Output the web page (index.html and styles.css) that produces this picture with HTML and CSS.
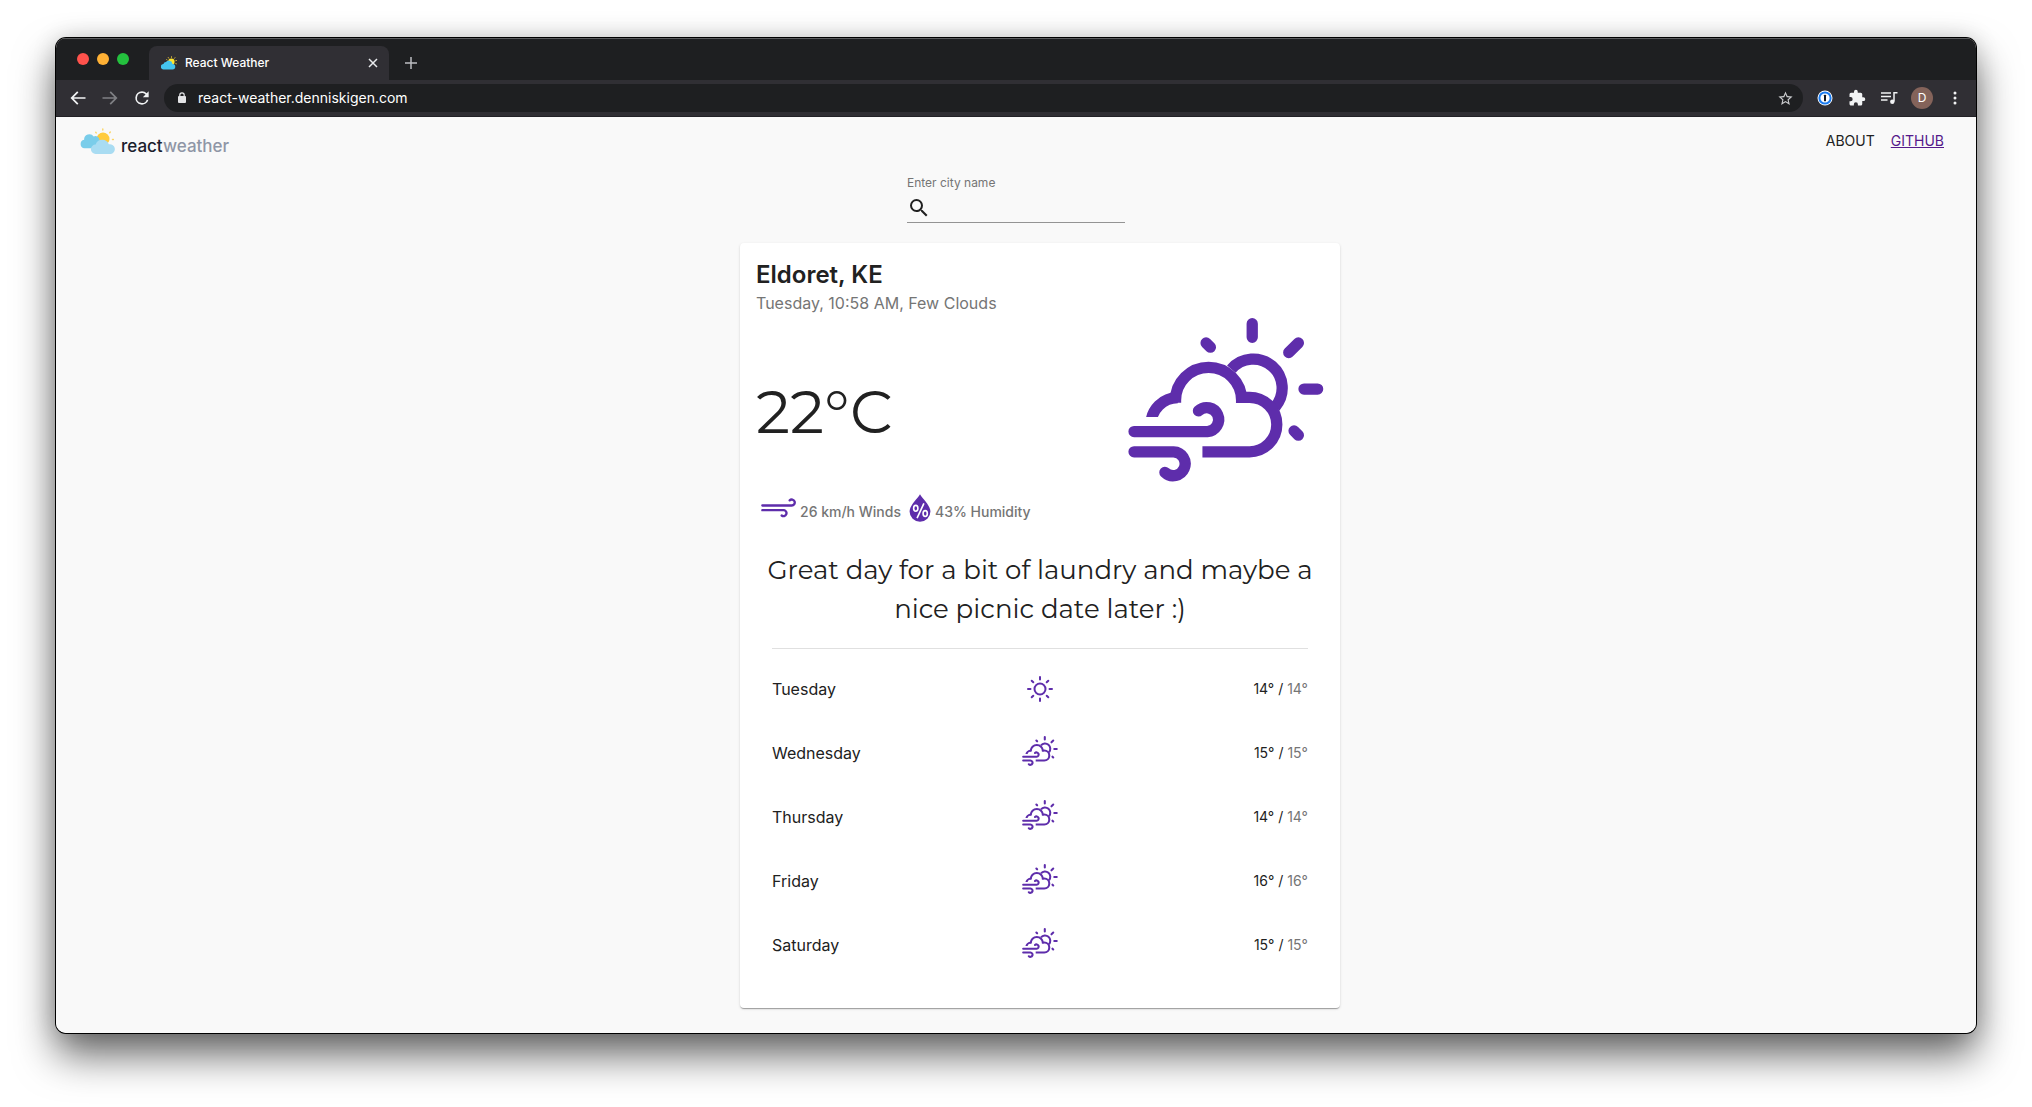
FILE: index.html
```html
<!DOCTYPE html>
<html lang="en">
<head>
<meta charset="utf-8">
<meta name="viewport" content="width=device-width, initial-scale=1">
<title>React Weather</title>
<link rel="stylesheet" href="styles.css">
</head>
<body>
<svg class="sprite" aria-hidden="true">
  <defs>
    <clipPath id="cloud-tail"><rect x="90" y="260" width="120" height="92"/></clipPath>
  </defs>
  <symbol id="gusts" viewBox="56 54 588 494">
    <g fill="none" stroke="currentColor" stroke-width="34">
      <path stroke-linecap="round" d="M429 71v41M290 129l13 13M568 129l-29 29M585 268h41M555 394l13 13"/>
      <path d="M366 208A87 87 0 0 1 498 322"/>
      <path clip-path="url(#cloud-tail)" d="M124 385V375A81 81 0 0 1 205 294"/>
      <path d="M198 309V302A99.500 99.500 0 0 1 397 302V310"/>
      <path d="M386 293H421A82 82 0 0 1 421 457H279"/>
      <path stroke-linecap="round" d="M73 396H294A36 36 0 1 0 267 334"/>
      <path stroke-linecap="round" d="M73 457H192A36 36 0 1 1 166 519"/>
    </g>
  </symbol>
  <symbol id="sunny" viewBox="0 0 26 26">
    <g fill="none" stroke="currentColor" stroke-width="2" stroke-linecap="round">
      <circle cx="13" cy="13" r="5.500"/>
      <path d="M13 1v2.500M13 22.500V25M1 13h2.500M22.500 13H25M4.700 4.700l1.600 1.600M19.700 19.700l1.600 1.600M4.700 21.300l1.600-1.600M19.700 6.300l1.600-1.600"/>
    </g>
  </symbol>
</svg>

<div class="window">
  <header class="chrome">
    <div class="tabs">
      <div class="lights"><span class="light red"></span><span class="light amber"></span><span class="light green"></span></div>
      <div class="tab">
        <svg class="favicon" viewBox="0 0 16 14" aria-hidden="true">
          <path stroke="#c8a93c" stroke-width="1" stroke-linecap="round" d="M10.500 .6v.9M7.200 1.400l.5.8M14 1.600l-.6.8M15.600 4.500l-.9.2M15.500 7.800l-.8-.3M5.600 3.600l.6.4"/>
          <circle cx="10.400" cy="5.800" r="3.200" fill="#ffe62e"/>
          <path fill="#45c5f0" d="M2.700 13.500a2.700 2.700 0 0 1-.3-5.400 3 3 0 0 1 2.500-2 3.700 3.700 0 0 1 6.600 1.800 2.800 2.800 0 0 1-.1 5.600z"/>
        </svg>
        <span class="tab-title">React Weather</span>
        <button class="tab-close" aria-label="Close tab"><svg viewBox="0 0 10 10" width="10" height="10"><path d="M1 1l8 8M9 1l-8 8" stroke="#e8eaed" stroke-width="1.500"/></svg></button>
      </div>
      <button class="new-tab" aria-label="New tab"><svg viewBox="0 0 12 12" width="12" height="12"><path d="M6 0v12M0 6h12" stroke="#bdbec2" stroke-width="1.500"/></svg></button>
    </div>
    <div class="toolbar">
      <button aria-label="Back"><svg viewBox="0 0 24 24" width="20" height="20"><path fill="#f1f3f4" d="M21 11H6.800l5.700-5.600L11 4l-8 8 8 8 1.500-1.400L6.800 13H21z"/></svg></button>
      <button aria-label="Forward"><svg viewBox="0 0 24 24" width="20" height="20"><path fill="#7f8084" d="M3 11h14.200l-5.700-5.600L13 4l8 8-8 8-1.500-1.400 5.700-5.600H3z"/></svg></button>
      <button aria-label="Reload"><svg viewBox="0 0 24 24" width="20" height="20"><path fill="#f1f3f4" d="M17.650 6.350A7.960 7.960 0 0 0 12 4a8 8 0 1 0 7.730 10h-2.080A6 6 0 1 1 12 6c1.660 0 3.140.69 4.220 1.780L13 11h7V4z"/></svg></button>
      <div class="omnibox">
        <svg viewBox="0 0 10 12" width="10" height="12" aria-hidden="true"><rect x="1" y="4" width="8" height="7" rx="1" fill="#e3e4e6"/><path d="M2.800 5V3a2.200 2.200 0 0 1 4.400 0v2" fill="none" stroke="#e3e4e6" stroke-width="1.200"/></svg>
        <input class="url" type="text" aria-label="Address" value="react-weather.denniskigen.com">
        <button aria-label="Bookmark"><svg viewBox="0 0 24 24" width="17" height="17"><path fill="#c9cacd" d="M22 9.240l-7.190-.62L12 2 9.190 8.630 2 9.240l5.460 4.730L5.820 21 12 17.270 18.180 21l-1.630-7.030zM12 15.400l-3.760 2.270 1-4.280-3.320-2.880 4.380-.38L12 6.100l1.710 4.040 4.380.38-3.320 2.880 1 4.280z"/></svg></button>
      </div>
      <button aria-label="Password manager"><svg viewBox="0 0 16 16" width="16" height="16"><circle cx="8" cy="8" r="7.500" fill="#fff"/><circle cx="8" cy="8" r="5.600" fill="#fff" stroke="#1a7bf0" stroke-width="2"/><rect x="7" y="4.700" width="2" height="6.600" rx=".6" fill="#14181f"/></svg></button>
      <button aria-label="Extensions"><svg viewBox="0 0 24 24" width="18" height="18"><path fill="#f1f3f4" d="M20.500 11H19V7a2 2 0 0 0-2-2h-4V3.500a2.500 2.500 0 0 0-5 0V5H4a2 2 0 0 0-2 2v3.800h1.500a2.700 2.700 0 0 1 0 5.400H2V20c0 1.100.9 2 2 2h3.800v-1.500a2.700 2.700 0 0 1 5.400 0V22H17a2 2 0 0 0 2-2v-4h1.500a2.500 2.500 0 0 0 0-5z"/></svg></button>
      <button aria-label="Media controls"><svg viewBox="0 0 17 14" width="17" height="14"><path fill="none" stroke="#f1f3f4" stroke-width="1.500" d="M0 2h10M0 5.500h10M0 9h6.500M13 10.500V1.700h3.500"/><circle cx="11.300" cy="10.700" r="2.200" fill="#f1f3f4"/></svg></button>
      <button class="avatar" aria-label="Profile">D</button>
      <button aria-label="Menu"><svg viewBox="0 0 4 14" width="4" height="14"><g fill="#f1f3f4"><circle cx="2" cy="2" r="1.500"/><circle cx="2" cy="7" r="1.500"/><circle cx="2" cy="12" r="1.500"/></g></svg></button>
    </div>
  </header>

  <div class="page">
    <nav class="nav">
      <div class="brand">
        <svg viewBox="0 0 36 27" width="36" height="27" aria-hidden="true">
          <path stroke="#fcd665" stroke-width="1.400" stroke-linecap="round" d="M22.800 1v1M15.700 4.200l.5.700M30.300 4l-.6.700M33.400 11.500h-.9"/>
          <circle cx="23" cy="11" r="6.500" fill="#ffcb3d"/>
          <path fill="#7acdea" d="M4.500 20.300a4.300 4.300 0 0 1-.4-8.500 5.300 5.300 0 0 1 9.600-3.300 4 4 0 0 1 5.800 3.700 4.200 4.200 0 0 1-1.300 8.100z"/>
          <path fill="#a9dcf2" d="M15.600 26a4.700 4.700 0 0 1 0-9.400 7 7 0 0 1 13.200-.3 4.900 4.900 0 0 1 2.200 9.700z"/>
        </svg>
        <span class="brand-name">react<span class="brand-light">weather</span></span>
      </div>
      <div class="links"><a class="about" href="#about">ABOUT</a><a class="github" href="#github">GITHUB</a></div>
    </nav>

    <form class="search">
      <label for="city">Enter city name</label>
      <div class="field">
        <svg viewBox="0 0 24 24" width="24" height="24" aria-hidden="true"><path fill="#212121" d="M15.500 14h-.79l-.28-.27A6.470 6.470 0 0 0 16 9.500 6.500 6.500 0 1 0 9.500 16c1.610 0 3.090-.59 4.230-1.570l.27.28v.79l5 4.990L20.490 19zm-6 0C7.010 14 5 11.990 5 9.500S7.010 5 9.500 5 14 7.010 14 9.500 11.990 14 9.500 14z"/></svg>
        <input id="city" type="text">
      </div>
    </form>

    <main class="stage">
      <article class="card">
        <h1>Eldoret, KE</h1>
        <p class="when">Tuesday, 10:58 AM, Few Clouds</p>
        <div class="now">
          <p class="temp">22°C</p>
          <svg class="now-icon"><use href="#gusts"/></svg>
        </div>
        <div class="details">
          <svg viewBox="93 86 105 60" width="35" height="20" aria-hidden="true"><path fill="none" stroke="currentColor" stroke-width="7" stroke-linecap="round" d="M97 108.500H185A9 9 0 1 0 179 93M97 122.500H162A9 9 0 1 1 155 138.500"/></svg>
          <span class="wind">26 km/h Winds</span>
          <svg class="drop" viewBox="539 71 66 86" width="22" height="28" aria-hidden="true">
            <path fill="currentColor" d="M572 72C580 86 604 106 604 125A32 31 0 0 1 540 125C540 106 564 86 572 72z"/>
            <g fill="none" stroke="#fff" stroke-width="5"><ellipse cx="559" cy="115" rx="6.500" ry="9"/><ellipse cx="588" cy="131" rx="6.500" ry="9"/><path d="M584 100L563 145"/></g>
          </svg>
          <span>43% Humidity</span>
        </div>
        <p class="advice">Great day for a bit of laundry and maybe a nice picnic date later :)</p>
        <table class="forecast">
          <tbody>
            <tr><th scope="row">Tuesday</th><td class="sky"><svg class="sun"><use href="#sunny"/></svg></td><td class="range">14° / <span>14°</span></td></tr>
            <tr><th scope="row">Wednesday</th><td class="sky"><svg><use href="#gusts"/></svg></td><td class="range">15° / <span>15°</span></td></tr>
            <tr><th scope="row">Thursday</th><td class="sky"><svg><use href="#gusts"/></svg></td><td class="range">14° / <span>14°</span></td></tr>
            <tr><th scope="row">Friday</th><td class="sky"><svg><use href="#gusts"/></svg></td><td class="range">16° / <span>16°</span></td></tr>
            <tr><th scope="row">Saturday</th><td class="sky"><svg><use href="#gusts"/></svg></td><td class="range">15° / <span>15°</span></td></tr>
          </tbody>
        </table>
      </article>
    </main>
  </div>
</div>
</body>
</html>
```
FILE: styles.css
```css
* { box-sizing: border-box; }

body {
  margin: 0;
  min-height: 100vh;
  padding: 38px 56px 74px;
  display: flex;
  background: #fff;
  color: #212121;
  font: 16px/24px Inter, "Liberation Sans", sans-serif;
}

h1, p { margin: 0; }
svg { display: block; flex: none; }
.sprite { width: 0; height: 0; position: absolute; }

button {
  border: 0;
  padding: 0;
  background: none;
  font: inherit;
  display: flex;
  align-items: center;
  justify-content: center;
  flex: none;
}

input {
  min-width: 0;
  flex: 1;
  border: 0;
  padding: 0;
  background: none;
  font: inherit;
  outline: 0;
}

/* Browser window */
.window {
  flex: 1;
  min-width: 0;
  display: flex;
  flex-direction: column;
  border-radius: 10px;
  overflow: hidden;
  box-shadow: 0 0 0 1px #000, 0 22px 40px rgba(0, 0, 0, .6), 0 0 24px rgba(0, 0, 0, .16);
}

.chrome { background: #1e1f21; box-shadow: inset 0 1px #5b5c5e; }

.tabs {
  height: 42px;
  padding: 0 21px;
  display: flex;
  align-items: flex-end;
}

.lights { display: flex; gap: 8px; padding-bottom: 15px; margin-right: 12px; }
.light { width: 12px; height: 12px; border-radius: 50%; }
.red { background: #ff524c; }
.amber { background: #ffb135; }
.green { background: #24c13e; }

.tab {
  position: relative;
  width: 256px;
  height: 34px;
  padding: 0 19px 0 20px;
  display: flex;
  align-items: center;
  gap: 8px;
}
.tab::before {
  content: "";
  position: absolute;
  inset: 0 8px;
  border-radius: 8px 8px 0 0;
  background: #302f34;
}
.tab > * { position: relative; }
.favicon { width: 16px; height: 14px; }
.tab-title { flex: 1; color: #fff; font-size: 12px; line-height: 16px; font-weight: 500; }
.tab-close { width: 10px; height: 16px; }
.new-tab { width: 12px; height: 34px; margin-left: 8px; }

.toolbar {
  height: 37px;
  padding: 0 11px 0 12px;
  display: flex;
  align-items: center;
  gap: 12px;
  background: #302f34;
  border-bottom: 1px solid #222126;
}
.toolbar button { width: 20px; height: 20px; }
.toolbar .avatar {
  width: 22px;
  height: 22px;
  border-radius: 50%;
  background: #84635a;
  color: #fff;
  font-size: 12px;
  line-height: 22px;
}

.omnibox {
  flex: 1;
  height: 28px;
  padding: 0 8px 0 13px;
  display: flex;
  align-items: center;
  gap: 11px;
  border-radius: 14px;
  background: #1e1f21;
}
.url { color: #fff; font-size: 14px; line-height: 20px; }

/* Page */
.page { flex: 1; padding: 0 24px 24px; background: #f9f9f9; }

.nav {
  height: 56px;
  padding: 11px 8px 0 0;
  display: flex;
  align-items: flex-start;
  justify-content: space-between;
}
.brand { display: flex; align-items: flex-end; gap: 5px; }
.brand-name { font-size: 17px; line-height: 18px; font-weight: 500; color: #1a202c; }
.brand-light { color: #8f96a6; }
.links { display: flex; gap: 16px; font-size: 14px; line-height: 26px; }
.about { color: #212121; text-decoration: none; }
.github { color: #551a8b; }

.search { width: 218px; margin: 0 auto 20px; }
.search label { display: block; font-size: 12px; line-height: 20px; color: #757575; }
.field { display: flex; align-items: center; height: 30px; border-bottom: 1px solid #949494; }

.stage { padding-left: 48px; }
.card {
  max-width: 600px;
  margin: 0 auto;
  padding: 16px 16px 31px;
  border-radius: 4px;
  background: #fff;
  box-shadow: 0 2px 1px -1px rgba(0, 0, 0, .2), 0 1px 1px rgba(0, 0, 0, .14), 0 1px 3px rgba(0, 0, 0, .12);
}
.card h1 { font-size: 24px; line-height: 32px; font-weight: 600; }
.when { color: #757575; }

.now { display: flex; justify-content: space-between; align-items: center; height: 164px; margin-top: 3px; color: #5e2dab; }
.temp { color: #212121; font: 400 60px/72px Montserrat, Inter, sans-serif; padding-top: 24px; }
.now-icon { width: 196px; height: 164px; }

.details {
  display: flex;
  align-items: center;
  gap: 4px;
  height: 28px;
  margin: 12px 0 29px;
  padding-left: 5px;
  color: #5e2dab;
  font-size: 14px;
  line-height: 20px;
  font-weight: 500;
}
.details span { padding-top: 8px; color: #757575; }
.details .wind { margin-right: 4px; }

.advice { text-align: center; font: 400 26px/39px Montserrat, Inter, sans-serif; }

.forecast {
  width: calc(100% - 32px);
  margin: 19px 16px 0;
  table-layout: fixed;
  border-collapse: separate;
  border-spacing: 0;
  border-top: 1px solid #e0e0e0;
  padding-top: 8px;
}
.forecast tr { height: 64px; }
.forecast th, .forecast td { padding: 0; font-weight: 400; text-align: left; }
.sky svg { width: 36px; height: 30px; margin: 0 auto 4px; color: #5e2dab; }
.sky .sun { width: 26px; height: 26px; margin-bottom: 0; }
.forecast .range { text-align: right; font-size: 14px; }
.range span { color: #757575; }
```
